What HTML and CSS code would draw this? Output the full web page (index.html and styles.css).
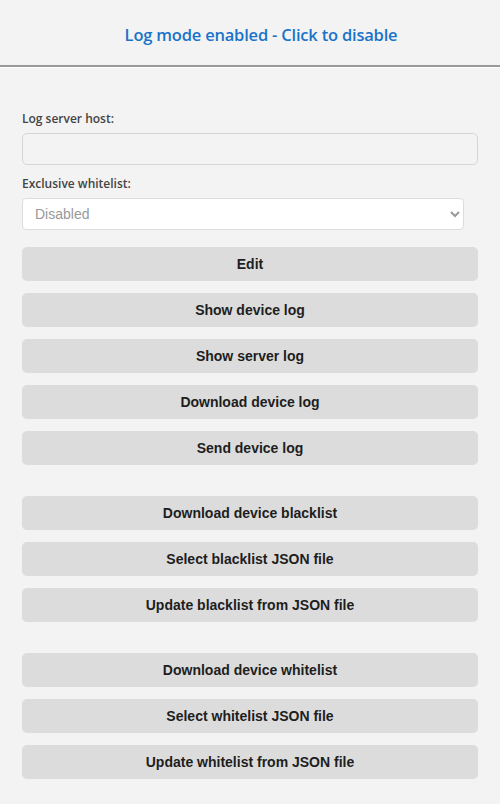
FILE: index.html
```html
<!DOCTYPE html>
<html lang="en">
<head>
  <meta charset="UTF-8" />
  <meta name="viewport" content="width=device-width, initial-scale=1.0" />
  <title>Log mode</title>
  <link rel="stylesheet" href="styles.css">
</head>
<body>
  <div class="header">
    <a class="toggle" href="#">Log mode enabled - Click to disable</a>
  </div>

  <div class="panel">
    <label>Log server host:</label>
    <input type="text" class="host">

    <label>Exclusive whitelist:</label>
    <select class="whitelist">
      <option>Disabled</option>
      <option>Enabled</option>
    </select>

    <div class="group">
      <button>Edit</button>
      <button>Show device log</button>
      <button>Show server log</button>
      <button>Download device log</button>
      <button>Send device log</button>
    </div>

    <div class="group">
      <button>Download device blacklist</button>
      <button>Select blacklist JSON file</button>
      <button>Update blacklist from JSON file</button>
    </div>

    <div class="group">
      <button>Download device whitelist</button>
      <button>Select whitelist JSON file</button>
      <button>Update whitelist from JSON file</button>
    </div>
  </div>
</body>
</html>
```

FILE: styles.css
```css
body {
  margin: 0;
  background-color: #f3f3f3;
  font-family: "Open Sans", sans-serif;
}

.header {
  height: 65px;
  display: flex;
  align-items: center;
  justify-content: center;
  padding-left: 22px;
  border-bottom: 2px solid #999;
  box-shadow: 0 1px 0 #fff;
}

.toggle {
  color: #1a73c9;
  font-weight: 600;
  font-size: 16.5px;
  text-decoration: none;
  letter-spacing: -0.2px;
  margin-top: 4px;
}

.panel {
  padding: 43px 22px 20px 22px;
}

label {
  display: block;
  font-size: 12px;
  font-weight: 600;
  color: #444;
  margin-bottom: 6px;
}

.host {
  display: block;
  box-sizing: border-box;
  width: 100%;
  height: 32px;
  margin: 0 0 10px 0;
  background-color: #f3f3f3;
  border: 1px solid #d6d6d6;
  border-radius: 5px;
}

.whitelist {
  display: block;
  box-sizing: border-box;
  width: 442px;
  height: 32px;
  padding: 0 8px;
  background-color: #fff;
  border: 1px solid #dcdcdc;
  border-radius: 4px;
  color: #999;
  font-family: "Liberation Sans", Arial, sans-serif;
  font-size: 14px;
}

.group {
  display: flex;
  flex-direction: column;
  gap: 12px;
  margin-top: 17px;
}

.group + .group {
  margin-top: 31px;
}

button {
  height: 34px;
  width: 100%;
  background-color: #dcdcdc;
  border: none;
  border-radius: 5px;
  color: #1e1e1e;
  font-family: "Liberation Sans", Arial, sans-serif;
  font-weight: bold;
  font-size: 14px;
  cursor: pointer;
}

button:hover {
  background-color: #cfcfcf;
}
```
